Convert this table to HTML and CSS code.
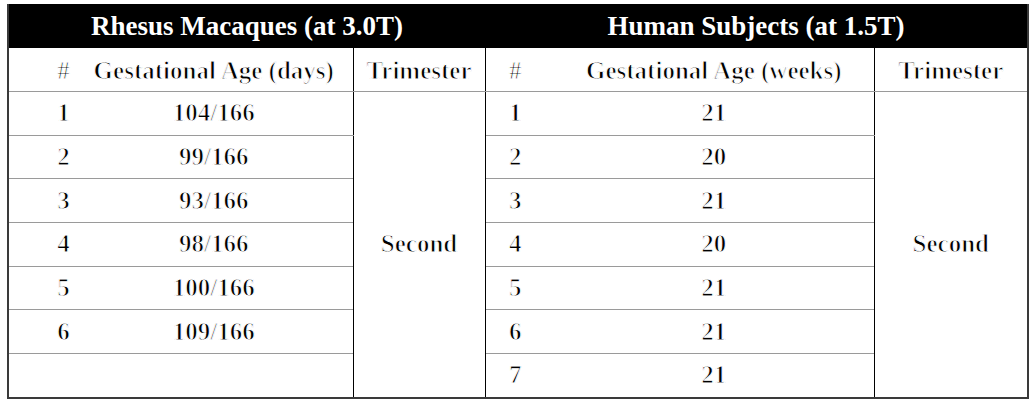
FILE: index.html
```html
<!DOCTYPE html>
<html>
<head>
<meta charset="utf-8">
<link rel="stylesheet" href="styles.css">
</head>
<body>
<div class="page">
<table class="data">
  <colgroup>
    <col class="c-num-l">
    <col class="c-ga-l">
    <col class="c-tri-l">
    <col class="c-num-r">
    <col class="c-ga-r">
    <col class="c-tri-r">
  </colgroup>
  <thead>
    <tr class="group">
      <th colspan="3">Rhesus Macaques (at 3.0T)</th>
      <th colspan="3">Human Subjects (at 1.5T)</th>
    </tr>
    <tr class="sub">
      <th class="num-l">#</th>
      <th class="ga-l">Gestational Age (days)</th>
      <th class="tri tri-l">Trimester</th>
      <th class="num-r">#</th>
      <th class="ga-r">Gestational Age (weeks)</th>
      <th class="tri tri-r">Trimester</th>
    </tr>
  </thead>
  <tbody>
    <tr>
      <td class="num-l">1</td><td class="ga-l">104/166</td>
      <td class="tri tri-l" rowspan="7">Second</td>
      <td class="num-r">1</td><td class="ga-r">21</td>
      <td class="tri tri-r" rowspan="7">Second</td>
    </tr>
    <tr><td class="num-l">2</td><td class="ga-l">99/166</td><td class="num-r">2</td><td class="ga-r">20</td></tr>
    <tr><td class="num-l">3</td><td class="ga-l">93/166</td><td class="num-r">3</td><td class="ga-r">21</td></tr>
    <tr><td class="num-l">4</td><td class="ga-l">98/166</td><td class="num-r">4</td><td class="ga-r">20</td></tr>
    <tr><td class="num-l">5</td><td class="ga-l">100/166</td><td class="num-r">5</td><td class="ga-r">21</td></tr>
    <tr><td class="num-l">6</td><td class="ga-l">109/166</td><td class="num-r">6</td><td class="ga-r">21</td></tr>
    <tr class="last"><td class="num-l"></td><td class="ga-l"></td><td class="num-r">7</td><td class="ga-r">21</td></tr>
  </tbody>
</table>
</div>
</body>
</html>
```

FILE: styles.css
```css
html, body {
  margin: 0;
  padding: 0;
  background: #ffffff;
}

.page {
  padding: 4px 0 0 7px;
}

.data {
  width: 1020px;
  table-layout: fixed;
  border-collapse: collapse;
  border-left: 2px solid #3a3a3a;
  border-right: 2px solid #3a3a3a;
  border-bottom: 2px solid #3a3a3a;
}

.c-num-l { width: 67px; }
.c-ga-l { width: 278px; }
.c-tri-l { width: 132px; }
.c-num-r { width: 69px; }
.c-ga-r { width: 320px; }
.c-tri-r { width: 154px; }

.data th,
.data td {
  font-family: "Liberation Serif", "Times New Roman", serif;
  font-size: 25px;
  font-weight: bold;
  color: #000000;
  -webkit-text-stroke: 1px #ffffff;
  padding: 0;
  text-align: center;
  vertical-align: middle;
  line-height: 30px;
  white-space: nowrap;
}

.group th {
  background: #000000;
  color: #ffffff;
  font-size: 27px;
  -webkit-text-stroke: 0;
  height: 44px;
}

.sub th {
  height: 40px;
  border-bottom: 1px solid #9a9a9a;
  padding-top: 3px;
}

.data tbody td {
  height: 42.7px;
  border-bottom: 1px solid #9a9a9a;
}

.data tbody tr.last td {
  border-bottom: none;
}

.data .num-l {
  padding-left: 43px;
}

.data .num-r {
  padding-right: 9px;
}

.tri-l {
  border-left: 1px solid #000000;
  border-right: 1px solid #000000;
}

.tri-r {
  border-left: 1px solid #000000;
}

.data tbody td.tri {
  border-bottom: none;
}
```
